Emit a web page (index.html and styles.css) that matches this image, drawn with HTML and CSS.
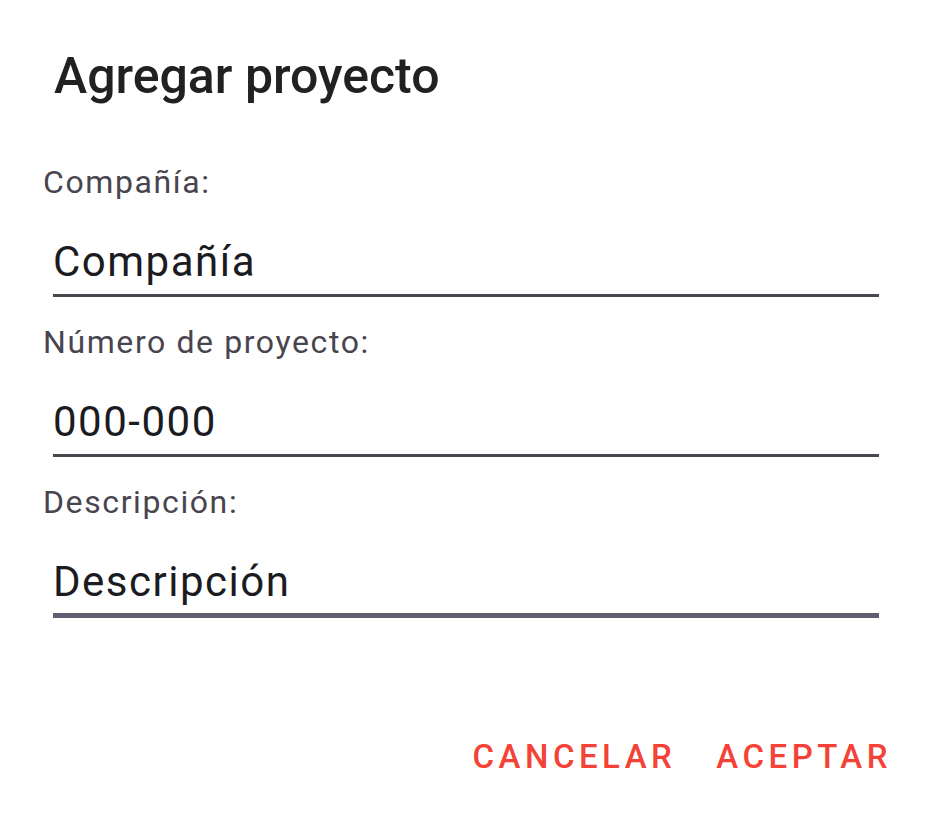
FILE: index.html
```html
<!DOCTYPE html>
<html lang="es">
<head>
<meta charset="utf-8">
<title>Agregar proyecto</title>
<link rel="stylesheet" href="styles.css">
</head>
<body>
<div class="dialog">
  <h1 class="title">Agregar proyecto</h1>
  <div class="fields">
    <div class="field">
      <div class="label">Compañía:</div>
      <div class="input">Compañía</div>
    </div>
    <div class="field">
      <div class="label">Número de proyecto:</div>
      <div class="input">000-000</div>
    </div>
    <div class="field">
      <div class="label">Descripción:</div>
      <div class="input focused">Descripción</div>
    </div>
  </div>
  <div class="actions">
    <button class="btn">CANCELAR</button>
    <button class="btn">ACEPTAR</button>
  </div>
</div>
</body>
</html>
```

FILE: styles.css
```css
html, body {
  margin: 0;
  padding: 0;
  background: #ffffff;
}
body {
  font-family: Roboto, "Noto Sans", sans-serif;
  width: 932px;
  height: 818px;
  overflow: hidden;
}
.dialog {
  padding: 46px 0 0 0;
}
.title {
  margin: 0 0 0 54px;
  font-size: 50px;
  line-height: 60px;
  font-weight: 500;
  color: #212121;
}
.fields {
  margin-top: 56px;
  display: flex;
  flex-direction: column;
  gap: 25px;
}
.field {
  display: flex;
  flex-direction: column;
}
.label {
  margin-left: 43px;
  font-size: 32px;
  line-height: 40px;
  letter-spacing: 1.6px;
  color: #49454f;
}
.input {
  margin: 0 53px 0 53px;
  padding: 35px 0 7px 0;
  font-size: 42px;
  line-height: 50px;
  letter-spacing: 1.5px;
  color: #1c1b1f;
  border-bottom: 3px solid #4a4750;
}
.input.focused {
  padding-bottom: 6px;
  border-bottom: 5px solid #625b71;
}
.actions {
  margin-top: 119px;
  display: flex;
  justify-content: flex-end;
  gap: 40px;
  padding-right: 40px;
}
.btn {
  background: none;
  border: none;
  padding: 0;
  font-family: Roboto, "Noto Sans", sans-serif;
  font-size: 33px;
  line-height: 40px;
  font-weight: 500;
  letter-spacing: 4.5px;
  color: #f44336;
}
```
